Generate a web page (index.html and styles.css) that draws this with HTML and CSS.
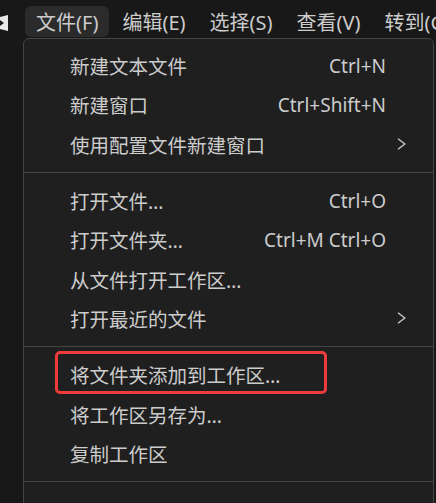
FILE: index.html
```html
<!DOCTYPE html>
<html lang="zh-CN">
<head>
    <meta charset="UTF-8">
    <meta name="viewport" content="width=device-width, initial-scale=1.0">
    <title>文件菜单</title>
    <link rel="stylesheet" href="styles.css">
</head>
<body>
    <div class="titlebar">
        <div class="logo">
            <svg width="9" height="16" viewBox="0 0 9 16">
                <path d="M0 2 L8 0 L8 16 L0 14 L0 11 L4 8 L0 5 Z" fill="#e8e8e8"/>
            </svg>
        </div>
        <div class="menubar">
            <span class="menubar-item active">文件(F)</span>
            <span class="menubar-item">编辑(E)</span>
            <span class="menubar-item">选择(S)</span>
            <span class="menubar-item">查看(V)</span>
            <span class="menubar-item">转到(G)</span>
        </div>
    </div>

    <div class="menu">
        <div class="item"><span class="label">新建文本文件</span><span class="keys">Ctrl+N</span><span class="arrow"></span></div>
        <div class="item"><span class="label">新建窗口</span><span class="keys">Ctrl+Shift+N</span><span class="arrow"></span></div>
        <div class="item"><span class="label">使用配置文件新建窗口</span><span class="keys"></span>
            <span class="arrow">
                <svg width="11" height="12" viewBox="0 0 11 12"><path d="M2 0.8 L8.8 6 L2 11.2" fill="none" stroke="#c8c8c8" stroke-width="1.4"/></svg>
            </span>
        </div>
        <div class="separator"></div>
        <div class="item"><span class="label">打开文件…</span><span class="keys">Ctrl+O</span><span class="arrow"></span></div>
        <div class="item"><span class="label">打开文件夹…</span><span class="keys">Ctrl+M Ctrl+O</span><span class="arrow"></span></div>
        <div class="item"><span class="label">从文件打开工作区…</span><span class="keys"></span><span class="arrow"></span></div>
        <div class="item"><span class="label">打开最近的文件</span><span class="keys"></span>
            <span class="arrow">
                <svg width="11" height="12" viewBox="0 0 11 12"><path d="M2 0.8 L8.8 6 L2 11.2" fill="none" stroke="#c8c8c8" stroke-width="1.4"/></svg>
            </span>
        </div>
        <div class="separator"></div>
        <div class="item"><span class="label">将文件夹添加到工作区…</span><span class="keys"></span><span class="arrow"></span>
            <span class="mark"></span>
        </div>
        <div class="item"><span class="label">将工作区另存为…</span><span class="keys"></span><span class="arrow"></span></div>
        <div class="item"><span class="label">复制工作区</span><span class="keys"></span><span class="arrow"></span></div>
        <div class="separator"></div>
        <div class="item"><span class="label"></span></div>
    </div>
</body>
</html>
```

FILE: styles.css
```css
body {
    margin: 0;
    height: 503px;
    overflow: hidden;
    background-color: #181818;
    color: #cccccc;
    font-family: "Noto Sans", "Noto Sans CJK SC", sans-serif;
}
.titlebar {
    display: flex;
    height: 38px;
    padding-top: 6px;
    box-sizing: border-box;
}
.logo {
    flex-shrink: 0;
    width: 25px;
    padding-top: 8px;
}
.menubar {
    display: flex;
    gap: 2px;
    white-space: nowrap;
}
.menubar-item {
    display: flex;
    align-items: center;
    height: 31px;
    padding: 0 11px;
    font-size: 20px;
    border-radius: 6px;
}
.menubar-item.active {
    background-color: #2b2b2b;
}
.menu {
    margin-left: 23px;
    width: 411px;
    height: 520px;
    box-sizing: border-box;
    padding-top: 7px;
    background-color: #1f1f1f;
    border: 1px solid #454545;
    border-radius: 6px;
}
.item {
    position: relative;
    display: flex;
    align-items: center;
    height: 39.3px;
    padding: 0 26px 0 46px;
    font-size: 19.5px;
    white-space: nowrap;
}
.label {
    flex: 1;
}
.keys {
    font-size: 19px;
}
.arrow {
    width: 21px;
    display: flex;
    justify-content: flex-end;
}
.separator {
    height: 1px;
    margin: 8px 0 8px;
    background-color: #454545;
}
.mark {
    position: absolute;
    left: 31px;
    top: -4px;
    width: 272px;
    height: 43px;
    box-sizing: border-box;
    border: 3px solid #ef3b3b;
    border-radius: 5px;
}
```
